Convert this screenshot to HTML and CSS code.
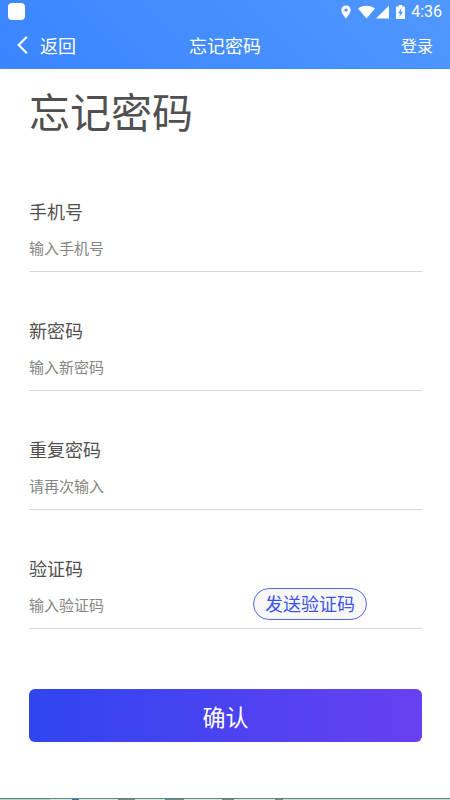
FILE: index.html
```
<!DOCTYPE html>
<html lang="zh-CN">
<head>
<meta charset="utf-8">
<meta name="viewport" content="width=device-width, initial-scale=1">
<title>忘记密码</title>
<link rel="stylesheet" href="styles.css">
</head>
<body>
<header class="top">
  <div class="status">
    <span class="app-dot"></span>
    <div class="status-icons">
      <svg class="pin" width="10" height="14" viewBox="0 0 10 14"><path fill="#fff" fill-rule="evenodd" d="M5 0.5C2.3 0.5.3 2.5.3 5.1.3 8.6 5 13.6 5 13.6S9.700 8.600 9.700 5.100C9.700 2.500 7.700.5 5 .5ZM5 3.400a1.700 1.700 0 1 1 0 3.400a1.700 1.700 0 0 1 0-3.400Z"/></svg>
      <svg width="17" height="14" viewBox="0 0 17 14"><path fill="#fff" d="M0 3.600C4.800-.2 12.200-.2 17 3.600L8.500 13.600Z"/></svg>
      <svg class="signal" width="13" height="14" viewBox="0 0 13 14"><path fill="#fff" d="M13 .5V13.500H0Z"/></svg>
      <svg class="battery" width="9" height="14" viewBox="0 0 9 14"><path fill="#fff" fill-rule="evenodd" d="M2.700 0h3.600v1.400H8.200q.8 0 .8.800V13.200q0 .8-.8.800H.8Q0 14 0 13.200V2.200q0-.8.8-.8H2.700ZM5.200 3.400L2 8.200H4L3.400 12L7 6.800H5Z"/></svg>
      <span class="clock">4:36</span>
    </div>
  </div>
  <nav class="nav">
    <a class="back" href="#"><svg width="11" height="18" viewBox="0 0 11 18"><path d="M9.200 1.500L1.700 9L9.200 16.500" fill="none" stroke="#fff" stroke-width="2.200" stroke-linecap="round"/></svg>返回</a>
    <span class="nav-title">忘记密码</span>
    <a class="login" href="#">登录</a>
  </nav>
</header>
<main class="page">
  <h1>忘记密码</h1>
  <form class="form">
    <div class="field">
      <label for="phone">手机号</label>
      <input id="phone" type="tel" placeholder="输入手机号">
    </div>
    <div class="field">
      <label for="password">新密码</label>
      <input id="password" type="password" placeholder="输入新密码">
    </div>
    <div class="field">
      <label for="repeat">重复密码</label>
      <input id="repeat" type="password" placeholder="请再次输入">
    </div>
    <div class="field">
      <label for="code">验证码</label>
      <input id="code" type="text" placeholder="输入验证码">
      <button class="send" type="button">发送验证码</button>
    </div>
    <button class="confirm" type="submit">确认</button>
  </form>
</main>
<footer class="edge"></footer>
</body>
</html>
```
FILE: styles.css
```
* { box-sizing: border-box; }
body {
  margin: 0;
  min-height: 100vh;
  display: flex;
  flex-direction: column;
  background: #fff;
  color: #505050;
  font-family: "Noto Sans CJK SC", sans-serif;
}
.top {
  background: linear-gradient(45deg, #3a85ff, #5097ff);
  color: #fff;
  border-bottom: 1px solid #4088f5;
}
.status {
  display: flex;
  justify-content: space-between;
  align-items: center;
  height: 23px;
  padding: 0 8px;
}
.app-dot {
  width: 17px;
  height: 17px;
  border-radius: 4px;
  background: #fff;
}
.status-icons { display: flex; align-items: center; }
.pin { margin-right: 7px; }
.signal { margin-left: 1px; }
.battery { margin: 0 6px 0 7px; }
.clock { font: 16px/23px Roboto, sans-serif; }
.nav {
  display: grid;
  grid-template-columns: 1fr auto 1fr;
  align-items: center;
  height: 45px;
  padding: 0 17px 2px;
  font-size: 18px;
  line-height: 42px;
}
.nav a { color: #fff; text-decoration: none; }
.back { display: flex; align-items: center; gap: 12px; }
.login { justify-self: end; font-size: 16px; }
.page { flex: 1; padding: 11px 28px 56px 29px; }
h1 {
  margin: 0 0 59px;
  font-size: 41px;
  line-height: 60px;
  font-weight: 400;
}
.form { display: flex; flex-direction: column; gap: 46px; }
.field {
  position: relative;
  display: flex;
  flex-direction: column;
  gap: 12px;
  border-bottom: 1px solid #d8d8d8;
}
label { font-size: 18px; line-height: 24px; }
input {
  width: 100%;
  height: 36px;
  padding: 0 0 11px;
  border: 0;
  outline: 0;
  background: none;
  color: #505050;
  font: inherit;
  font-size: 15px;
}
input::placeholder { color: #858585; opacity: 1; }
button { font: inherit; cursor: pointer; }
.send {
  position: absolute;
  right: 55px;
  bottom: 8px;
  height: 32px;
  padding: 0 11px 1px;
  border: 1px solid #5468ee;
  border-radius: 16px;
  background: #f8f8f8;
  color: #3c54ee;
  font-size: 18px;
  line-height: 29px;
}
.confirm {
  height: 53px;
  margin-top: 14px;
  padding: 0;
  border: 0;
  border-radius: 6px;
  background: linear-gradient(90deg, #2f45f0, #6840f0);
  color: #fff;
  font-size: 23px;
}
.edge {
  height: 2px;
  border-top: 1px solid #5c8c80;
  background: linear-gradient(90deg, #b8cbc8 50px, #d5e6e3 50px 72px, #4668b0 72px 79px, #d5e6e3 79px 118px, #788784 118px 135px, #d5e6e3 135px 165px, #4090c8 165px 168px, #788784 168px 184px, #d5e6e3 184px 222px, #788784 222px 234px, #d5e6e3 234px 275px, #788784 275px 283px, #c7dad7 283px);
}
```
